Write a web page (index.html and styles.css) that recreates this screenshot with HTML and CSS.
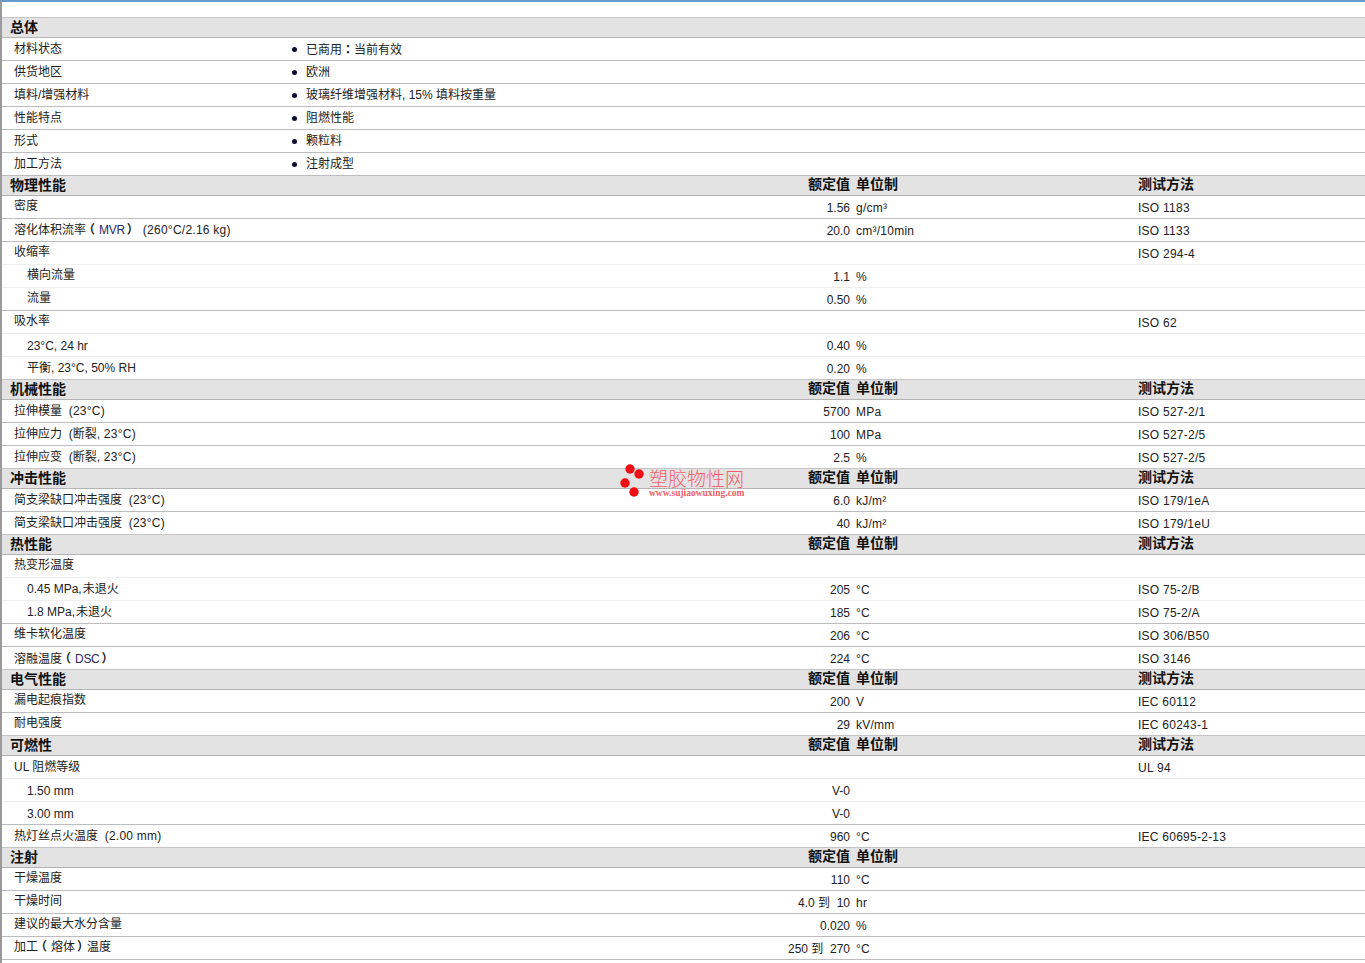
FILE: index.html
```html
<!DOCTYPE html>
<html lang="zh">
<head>
<meta charset="utf-8">
<title>塑胶物性</title>
<link rel="stylesheet" href="styles.css">
</head>
<body>
<div class="sheet">
  <div class="head"><span class="h-name">总体</span></div>
  <div class="row bullet"><span class="name">材料状态</span><span class="item">已商用<span class="colon" lang="zh-Hant">：</span>当前有效</span></div>
  <div class="row bullet"><span class="name">供货地区</span><span class="item">欧洲</span></div>
  <div class="row bullet"><span class="name">填料/增强材料</span><span class="item">玻璃纤维增强材料, 15% 填料按重量</span></div>
  <div class="row bullet"><span class="name">性能特点</span><span class="item">阻燃性能</span></div>
  <div class="row bullet"><span class="name">形式</span><span class="item">颗粒料</span></div>
  <div class="row bullet"><span class="name">加工方法</span><span class="item">注射成型</span></div>

  <div class="head"><span class="h-name">物理性能</span><span class="h-val">额定值</span><span class="h-unit">单位制</span><span class="h-test">测试方法</span></div>
  <div class="row"><span class="name">密度</span><span class="val">1.56</span><span class="unit">g/cm³</span><span class="test">ISO 1183</span></div>
  <div class="row"><span class="name low">溶化体积流率<span class="po">（</span><span class="link">MVR</span><span class="pc">）</span><span class="note gap">(260°C/2.16 kg)</span></span><span class="val">20.0</span><span class="unit">cm³/10min</span><span class="test">ISO 1133</span></div>
  <div class="row sub-next"><span class="name">收缩率</span><span class="val"></span><span class="unit"></span><span class="test">ISO 294-4</span></div>
  <div class="row sub sub-next"><span class="name">横向流量</span><span class="val">1.1</span><span class="unit">%</span><span class="test"></span></div>
  <div class="row sub"><span class="name">流量</span><span class="val">0.50</span><span class="unit">%</span><span class="test"></span></div>
  <div class="row sub-next"><span class="name">吸水率</span><span class="val"></span><span class="unit"></span><span class="test">ISO 62</span></div>
  <div class="row sub sub-next"><span class="name lower">23°C, 24 hr</span><span class="val">0.40</span><span class="unit">%</span><span class="test"></span></div>
  <div class="row sub"><span class="name low">平衡, 23°C, 50% RH</span><span class="val">0.20</span><span class="unit">%</span><span class="test"></span></div>

  <div class="head"><span class="h-name">机械性能</span><span class="h-val">额定值</span><span class="h-unit">单位制</span><span class="h-test">测试方法</span></div>
  <div class="row"><span class="name low">拉伸模量 &nbsp;<span class="note">(23°C)</span></span><span class="val">5700</span><span class="unit">MPa</span><span class="test">ISO 527-2/1</span></div>
  <div class="row"><span class="name low">拉伸应力 &nbsp;(断裂<span class="note">, 23°C)</span></span><span class="val">100</span><span class="unit">MPa</span><span class="test">ISO 527-2/5</span></div>
  <div class="row"><span class="name low">拉伸应变 &nbsp;(断裂<span class="note">, 23°C)</span></span><span class="val">2.5</span><span class="unit">%</span><span class="test">ISO 527-2/5</span></div>

  <div class="head"><span class="h-name">冲击性能</span><span class="h-val">额定值</span><span class="h-unit">单位制</span><span class="h-test">测试方法</span></div>
  <div class="row"><span class="name low">简支梁缺口冲击强度 &nbsp;<span class="note">(23°C)</span></span><span class="val">6.0</span><span class="unit">kJ/m²</span><span class="test">ISO 179/1eA</span></div>
  <div class="row"><span class="name low">简支梁缺口冲击强度 &nbsp;<span class="note">(23°C)</span></span><span class="val">40</span><span class="unit">kJ/m²</span><span class="test">ISO 179/1eU</span></div>

  <div class="head"><span class="h-name">热性能</span><span class="h-val">额定值</span><span class="h-unit">单位制</span><span class="h-test">测试方法</span></div>
  <div class="row sub-next"><span class="name">热变形温度</span><span class="val"></span><span class="unit"></span><span class="test"></span></div>
  <div class="row sub sub-next"><span class="name low">0.45 MPa,<span class="tight">未退火</span></span><span class="val">205</span><span class="unit">°C</span><span class="test">ISO 75-2/B</span></div>
  <div class="row sub"><span class="name low">1.8 MPa,<span class="tight">未退火</span></span><span class="val">185</span><span class="unit">°C</span><span class="test">ISO 75-2/A</span></div>
  <div class="row"><span class="name">维卡软化温度</span><span class="val">206</span><span class="unit">°C</span><span class="test">ISO 306/B50</span></div>
  <div class="row"><span class="name lower">溶融温度<span class="po">（</span><span class="link">DSC</span><span class="pc">）</span></span><span class="val">224</span><span class="unit">°C</span><span class="test">ISO 3146</span></div>

  <div class="head"><span class="h-name">电气性能</span><span class="h-val">额定值</span><span class="h-unit">单位制</span><span class="h-test">测试方法</span></div>
  <div class="row"><span class="name">漏电起痕指数</span><span class="val">200</span><span class="unit">V</span><span class="test">IEC 60112</span></div>
  <div class="row"><span class="name">耐电强度</span><span class="val">29</span><span class="unit">kV/mm</span><span class="test">IEC 60243-1</span></div>

  <div class="head"><span class="h-name">可燃性</span><span class="h-val">额定值</span><span class="h-unit">单位制</span><span class="h-test">测试方法</span></div>
  <div class="row sub-next"><span class="name low">UL 阻燃等级</span><span class="val"></span><span class="unit"></span><span class="test">UL 94</span></div>
  <div class="row sub sub-next"><span class="name lower">1.50 mm</span><span class="val">V-0</span><span class="unit"></span><span class="test"></span></div>
  <div class="row sub"><span class="name lower">3.00 mm</span><span class="val">V-0</span><span class="unit"></span><span class="test"></span></div>
  <div class="row"><span class="name low">热灯丝点火温度 &nbsp;<span class="note">(2.00 mm)</span></span><span class="val">960</span><span class="unit">°C</span><span class="test">IEC 60695-2-13</span></div>

  <div class="head"><span class="h-name">注射</span><span class="h-val">额定值</span><span class="h-unit">单位制</span><span class="h-test"></span></div>
  <div class="row"><span class="name">干燥温度</span><span class="val">110</span><span class="unit">°C</span><span class="test"></span></div>
  <div class="row"><span class="name">干燥时间</span><span class="val">4.0 到 &nbsp;10</span><span class="unit">hr</span><span class="test"></span></div>
  <div class="row"><span class="name">建议的最大水分含量</span><span class="val">0.020</span><span class="unit">%</span><span class="test"></span></div>
  <div class="row"><span class="name">加工<span class="po">（</span>熔体<span class="pc">）</span>温度</span><span class="val">250 到 &nbsp;270</span><span class="unit">°C</span><span class="test"></span></div>
</div>
<div class="mark">
  <svg class="mark-dots" width="24" height="34" viewBox="0 0 24 34" aria-hidden="true">
    <circle cx="10" cy="5" r="4.7"></circle>
    <circle cx="19" cy="10" r="4.7"></circle>
    <circle cx="5" cy="19" r="4.7"></circle>
    <circle cx="14" cy="28" r="4.7"></circle>
  </svg>
  <div class="mark-text">
    <div class="mark-title">塑胶物性网</div>
    <div class="mark-url">www.sujiaowuxing.com</div>
  </div>
</div>
</body>
</html>
```
FILE: styles.css
```css
* { box-sizing: border-box; }
html, body { margin: 0; padding: 0; }
body {
  height: 963px;
  overflow: hidden;
  background: #fff;
  border-top: 2px solid #6699cc;
  border-left: 2px solid #9a9a9a;
  position: relative;
  font-family: "Liberation Sans", "Noto Sans CJK SC", sans-serif;
  font-size: 12px;
  color: #222;
}
.sheet { padding-top: 16px; }
.head, .row {
  display: grid;
  grid-template-columns: 848px 6px 282px 1fr;
  white-space: nowrap;
}
.head {
  height: 21px;
  margin-top: -1px;
  background: #e3e3e3;
  border-top: 1px solid #c4c4c4;
  border-bottom: 1px solid #b4b4b4;
  font-size: 14px;
  font-weight: bold;
  line-height: 17px;
  color: #111;
}
.h-name { grid-column: 1; padding-left: 8px; grid-row: 1; position: relative; top: 1px; }
.h-val { grid-column: 1; grid-row: 1; text-align: right; }
.h-unit { grid-column: 3; grid-row: 1; }
.h-test { grid-column: 4; grid-row: 1; }
.row {
  height: 23px;
  border-bottom: 1px solid #bdbdc0;
  line-height: 22px;
}
.row.sub-next { border-bottom-color: #eeeeee; }
.name { grid-column: 1; grid-row: 1; padding-left: 12px; position: relative; top: -1px; }
.name.low { top: 0; }
.name.lower { top: 1px; }
.val { grid-column: 1; grid-row: 1; text-align: right; position: relative; top: 1px; }
.unit { grid-column: 3; position: relative; top: 1px; letter-spacing: 0.25px; }
.test { grid-column: 4; position: relative; top: 1px; letter-spacing: 0.25px; }
.sub .name { padding-left: 25px; }
.link { color: #2a2a5e; letter-spacing: -0.3px; }
.note { letter-spacing: 0.25px; }
.gap { margin-left: 6px; }
.tight { margin-left: 1px; }
.po, .pc { font-weight: bold; font-feature-settings: "halt"; }
.po { margin-left: 3px; margin-right: 4px; }
.pc { margin-left: 2px; margin-right: 4px; }
.colon { font-family: "Noto Sans CJK TC", sans-serif; font-weight: bold; }
.bullet { display: block; position: relative; }
.bullet .name { position: absolute; left: 0; top: 0; }
.item { position: absolute; left: 304px; top: 0; }
.item::before {
  content: "";
  position: absolute;
  left: -14px;
  top: 9px;
  width: 5px;
  height: 5px;
  border-radius: 50%;
  background: #0c0c30;
}
.mark {
  position: absolute;
  left: 618px;
  top: 462px;
  display: flex;
  gap: 5px;
  align-items: flex-start;
  pointer-events: none;
}
.mark-dots { fill: #f00d14; display: block; }
.mark-text { padding-top: 2px; }
.mark-title {
  font-family: "Liberation Sans", "Noto Sans CJK SC", sans-serif;
  font-size: 19px;
  font-weight: 300;
  line-height: 22px;
  color: #f4606a;
  position: relative;
  top: 3px;
}
.mark-url {
  font-family: "Liberation Serif", serif;
  font-size: 9.5px;
  font-weight: bold;
  line-height: 10px;
  color: #f4606a;
}
```
